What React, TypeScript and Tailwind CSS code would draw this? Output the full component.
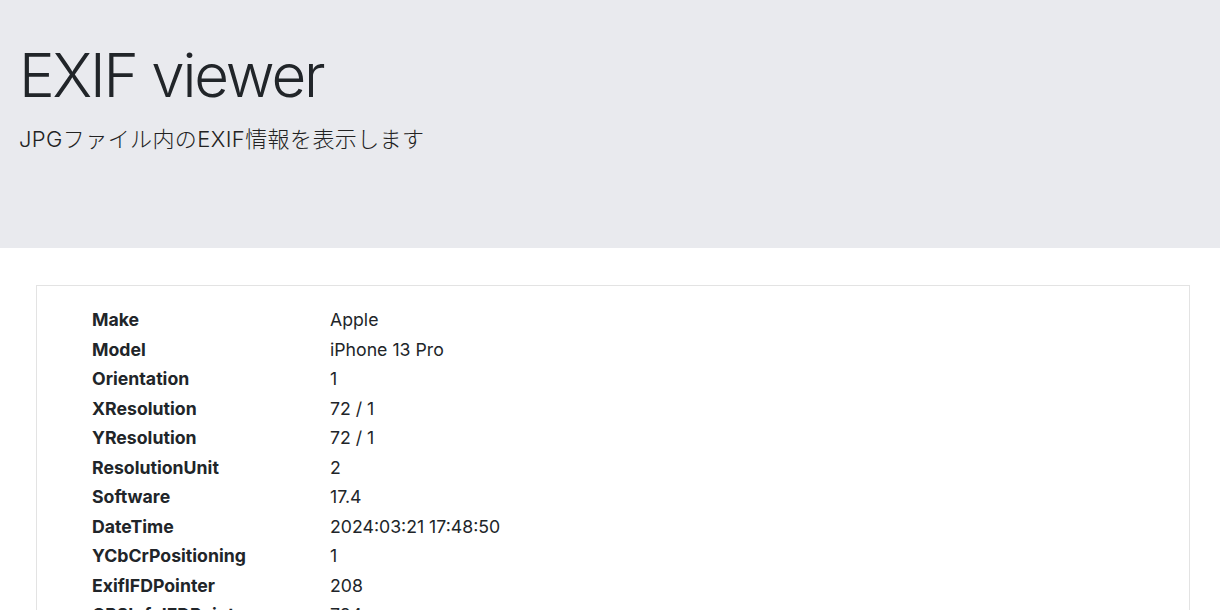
import React from "react";

const rows: [string, string][] = [
  ["Make", "Apple"],
  ["Model", "iPhone 13 Pro"],
  ["Orientation", "1"],
  ["XResolution", "72 / 1"],
  ["YResolution", "72 / 1"],
  ["ResolutionUnit", "2"],
  ["Software", "17.4"],
  ["DateTime", "2024:03:21 17:48:50"],
  ["YCbCrPositioning", "1"],
  ["ExifIFDPointer", "208"],
  ["GPSInfoIFDPointer", "784"],
  ["ExposureTime", "1 / 60"],
];

export default function App() {
  return (
    <div className="h-[610px] overflow-hidden bg-white text-[#212529]">
      <div className="h-[248px] bg-[#e9eaee] px-[19px] pt-[39px] font-['Inter','Noto_Sans_CJK_JP',sans-serif]">
        <h1 className="text-[60px] font-light leading-[72px] tracking-[-2.2px]">EXIF viewer</h1>
        <p className="mt-[14px] text-[22px] font-light leading-[28px] tracking-[0.4px] text-[#222]">
          JPGファイル内のEXIF情報を表示します
        </p>
      </div>
      <div className="ml-[36px] mr-[30px] mt-[37px] border border-[#e3e3e3] px-[55px] pt-[19px] pb-4 font-['Inter',sans-serif]">
        <table className="text-[17.7px]">
          <tbody>
            {rows.map(([k, v]) => (
              <tr key={k} className="h-[29.5px]">
                <td className="w-[238px] font-bold leading-[29.5px]">{k}</td>
                <td className="leading-[29.5px]">{v}</td>
              </tr>
            ))}
          </tbody>
        </table>
      </div>
    </div>
  );
}
